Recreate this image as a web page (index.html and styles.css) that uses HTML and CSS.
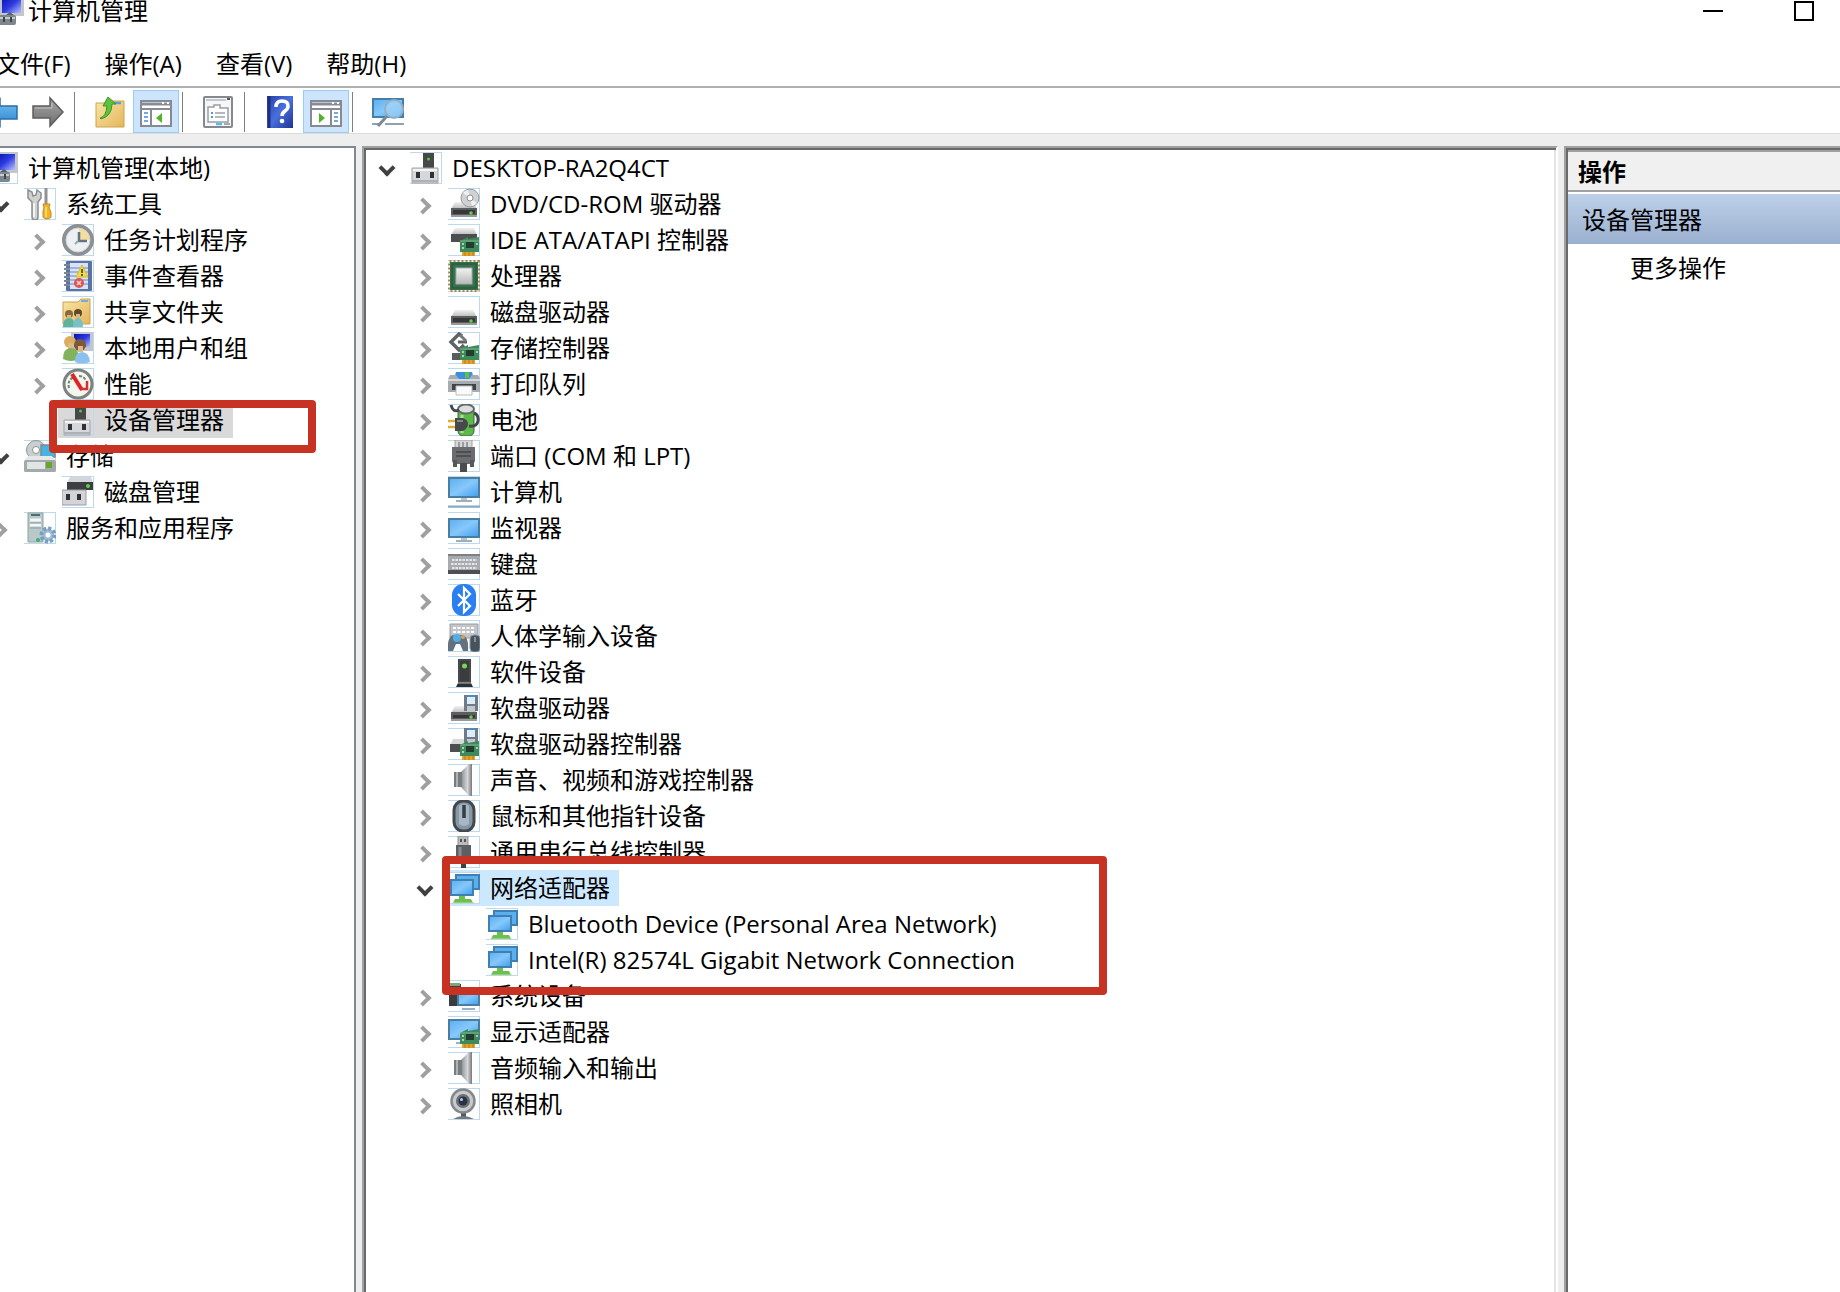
FILE: index.html
```html
<!DOCTYPE html>
<html lang="zh-CN">
<head>
  <meta charset="UTF-8" />
  <meta name="viewport" content="width=device-width, initial-scale=1.0"/>
  <title>计算机管理</title>
  <link rel="stylesheet" href="styles.css">
</head>
<body>
  <!-- icon sprite -->
  <svg class="sprite" aria-hidden="true">
    <defs>
      <linearGradient id="g-screen" x1="0" y1="0" x2="1" y2="1">
        <stop offset="0" stop-color="#5fb0f0"/><stop offset=".5" stop-color="#86c8fb"/><stop offset="1" stop-color="#46a2ee"/>
      </linearGradient>
      <linearGradient id="g-metal" x1="0" y1="0" x2="0" y2="1">
        <stop offset="0" stop-color="#f2f2f2"/><stop offset="1" stop-color="#b9b9b9"/>
      </linearGradient>
      <linearGradient id="g-cone" x1="0" y1="0" x2="1" y2="0">
        <stop offset="0" stop-color="#8b8f92"/><stop offset=".6" stop-color="#d5d7d8"/><stop offset="1" stop-color="#777"/>
      </linearGradient>
      <linearGradient id="g-navy" x1="0" y1="0" x2="1" y2="1">
        <stop offset="0" stop-color="#0a10b0"/><stop offset=".5" stop-color="#2d3be0"/><stop offset="1" stop-color="#b9c4ff"/>
      </linearGradient>
      <linearGradient id="g-folder" x1="0" y1="0" x2="1" y2="1">
        <stop offset="0" stop-color="#fbe6a6"/><stop offset="1" stop-color="#e3b55c"/>
      </linearGradient>
      <linearGradient id="g-blue" x1="0" y1="0" x2="0" y2="1">
        <stop offset="0" stop-color="#7cc4f2"/><stop offset="1" stop-color="#2583cf"/>
      </linearGradient>
      <linearGradient id="g-gray" x1="0" y1="0" x2="0" y2="1">
        <stop offset="0" stop-color="#a5a5a5"/><stop offset="1" stop-color="#707070"/>
      </linearGradient>
      <linearGradient id="g-help" x1="0" y1="0" x2="1" y2="1">
        <stop offset="0" stop-color="#2740a8"/><stop offset=".5" stop-color="#4a6fdc"/><stop offset="1" stop-color="#1e3494"/>
      </linearGradient>
    </defs>

    <symbol id="computer" viewBox="0 0 32 32">
      <path d="M8 0h24v21H8z" fill="#c3c6cc"/><path d="M10 2h19v16H10z" fill="url(#g-navy)"/>
      <path d="M14 20l4-3 5 4z" fill="#56606a"/>
      <rect x="7" y="20" width="17" height="10" rx="2" fill="#7c868c"/>
      <path d="M8 23h15" stroke="#c6ced2" stroke-width="2"/><path d="M12 22v5M19 22v5" stroke="#3c4448" stroke-width="2"/>
    </symbol>
    <symbol id="tools" viewBox="0 0 32 32">
      <path d="M4 2l4 2 1 4 3-1 1-5 4 3v5l-3 4v15q0 3-3 3t-3-3V14L4 10z" fill="#d0d2d2" stroke="#8b8d8e" stroke-width="1.5"/>
      <path d="M10 15v14" stroke="#f4f4f4" stroke-width="2"/>
      <path d="M22 0v16" stroke="#8e9294" stroke-width="3"/><path d="M19 16h7l-1 4 2 4v5q-4 4-8 0v-6l1-3z" fill="#f0b428" stroke="#c98b12"/>
      <path d="M22 19v10" stroke="#ffdf80" stroke-width="1.5"/>
    </symbol>
    <symbol id="clock" viewBox="0 0 32 32">
      <circle cx="16" cy="16" r="14" fill="#eef1f4" stroke="#8d9092" stroke-width="4"/>
      <path d="M17 16V4a12 12 0 0 1 11 12z" fill="#f5dca0"/><circle cx="16" cy="16" r="12" fill="none" stroke="#cfd3d6" stroke-width="1"/>
      <path d="M17 8v9h8" fill="none" stroke="#65747f" stroke-width="2.5"/><path d="M16 17l-3 3" stroke="#9aa6ae" stroke-width="2"/>
    </symbol>
    <symbol id="events" viewBox="0 0 32 32">
      <rect x="4" y="1" width="26" height="30" rx="1" fill="#5a72a4"/><rect x="8" y="3" width="18" height="26" fill="#d9e3f3"/>
      <path d="M8 8h18M8 12h18M8 16h18M8 20h18M8 24h18" stroke="#8fa6d0" stroke-width="1.5"/>
      <path d="M2 5h6M2 9h6M2 13h6M2 17h6M2 21h6M2 25h6" stroke="#7b8797" stroke-width="2"/>
      <path d="M20 5l6 12H14z" fill="#f0dc4a" stroke="#d4bc30"/><path d="M20 9v4M20 14v2" stroke="#6a6020" stroke-width="2"/>
      <circle cx="17" cy="23" r="5" fill="#dd5555"/><path d="M15 21l4 4M19 21l-4 4" stroke="#fbd5d5" stroke-width="1.5"/>
    </symbol>
    <symbol id="shared" viewBox="0 0 32 32">
      <path d="M1 6h15l3-3h9v25H1z" fill="url(#g-folder)" stroke="#cda04c"/><path d="M19 5h7" stroke="#6eaee0" stroke-width="2"/>
      <circle cx="7" cy="18" r="4" fill="#8a6a3c"/><circle cx="16" cy="17" r="4" fill="#5c4a2a"/>
      <path d="M1 31q0-9 6-9t5 9z" fill="#5fb39a"/><path d="M11 31q0-9 5-9t5 9z" fill="#78c0c4"/>
      <path d="M5 19h4v3H5zM14 18h4v4h-4z" fill="#e0b482"/>
    </symbol>
    <symbol id="users" viewBox="0 0 32 32">
      <path d="M9 0h22v19H9z" fill="#c3c6cc"/><path d="M12 2h16v13H12z" fill="url(#g-navy)"/>
      <circle cx="8" cy="10" r="6" fill="#dcae5c"/><circle cx="18" cy="13" r="6" fill="#7a5b36"/>
      <path d="M6 11h6v6H6zM16 14h5v6h-5z" fill="#dcb98b"/>
      <path d="M1 27q0-11 8-11t8 11q-8 4-16 0z" fill="#82b25c"/><path d="M13 30q0-10 7-10t8 10q-8 3-15 0z" fill="#8cc0ee"/>
    </symbol>
    <symbol id="perf" viewBox="0 0 32 32">
      <circle cx="16" cy="16" r="14" fill="#f5f5f0" stroke="#7d827e" stroke-width="3"/>
      <path d="M7 20q-2-9 6-11M17 8q5 0 7 5" fill="none" stroke="#5e8c7c" stroke-width="2" stroke-dasharray="3 1.5"/>
      <path d="M10 6l10 16" stroke="#e02424" stroke-width="4"/><path d="M25 13v8h-6" fill="none" stroke="#d63030" stroke-width="2.5"/>
    </symbol>
    <symbol id="devmgr" viewBox="0 0 32 32">
      <path d="M13 1h11v17H13z" fill="#48484a"/><path d="M16 4h5v4h-5z" fill="#35503a"/><circle cx="18.500" cy="7" r="1.500" fill="#62c04c"/>
      <path d="M2 16h26v15H2z" fill="#d6d7da" stroke="#a4a5a8"/><path d="M3 17h24v2H3z" fill="#f4f4f6"/>
      <path d="M6 20h4v6H6zM20 20h4v6h-4z" fill="#303236"/><path d="M2 29h26" stroke="#aeb0b4" stroke-width="2"/>
    </symbol>
    <symbol id="storage" viewBox="0 0 32 32">
      <circle cx="12" cy="10" r="9.500" fill="#c9cfce" stroke="#8e9694"/><circle cx="12" cy="10" r="3.500" fill="#fff" stroke="#8a9290"/>
      <path d="M17 5h14v12H17z" fill="#44b4e2" stroke="#7d8890" stroke-width="1.500"/>
      <path d="M4 16h24l4 5H0z" fill="#e6e8e8"/><rect x="0" y="20" width="32" height="12" rx="2" fill="#a3a8aa"/>
      <rect x="3" y="22" width="18" height="7" fill="#dfe4e4"/><rect x="22" y="22" width="6" height="6" fill="#67a628"/>
    </symbol>
    <symbol id="diskmgmt" viewBox="0 0 32 32">
      <path d="M8 1h21l2 6H5z" fill="#d4d5d8"/><path d="M5 6h26v8H5z" fill="#3c3e40"/><circle cx="26" cy="10" r="2" fill="#5ed04a"/>
      <path d="M0 14h24v15H0z" fill="#d3d4d7" stroke="#9b9c9f"/><path d="M4 18h4v6H4zM15 18h4v6h-4z" fill="#303236"/>
    </symbol>
    <symbol id="services" viewBox="0 0 32 32">
      <path d="M4 1h15v29H4z" fill="#b9c8c8" stroke="#90a3a4"/><path d="M7 2h9v2H7z" fill="#4e6c76"/>
      <path d="M6 8h11M6 13h11" stroke="#f4f8f8" stroke-width="3"/><path d="M6 11h11M6 16h11" stroke="#8b9ea4"/>
      <circle cx="14" cy="28" r="2" fill="#3fb060"/>
      <circle cx="24" cy="23" r="6.500" fill="#9cbedb" stroke="#7a9fbe" stroke-width="4" stroke-dasharray="3 2"/><circle cx="24" cy="23" r="2.500" fill="#fff"/>
    </symbol>
    <symbol id="drive" viewBox="0 0 32 32">
      <path d="M7 14h18l4 7H3z" fill="url(#g-metal)"/><path d="M3 20h26v9H3z" fill="#5b5d5e"/><path d="M5 22h22v4H5z" fill="#353738"/>
      <circle cx="23" cy="25" r="1.800" fill="#5ed04a"/><path d="M3 28h26" stroke="#999" stroke-width="2"/>
    </symbol>
    <symbol id="card" viewBox="0 0 32 32">
      <path d="M12 17l8-4v2l11-2v15H12z" fill="#3f8a5a"/><path d="M12 17h19" stroke="#7fb890"/>
      <path d="M18 18h8v6h-8z" fill="#223c30"/><path d="M14 20h2M28 20h2M14 24h2" stroke="#a6d4ae" stroke-width="2"/><path d="M14 28h13v4H14z" fill="#e0a42c"/>
      <path d="M17 28v4M21 28v4M25 28v4" stroke="#b87c14"/>
    </symbol>
    <symbol id="dvd" viewBox="0 0 32 32">
      <use href="#drive"/><circle cx="22" cy="10" r="9" fill="#cfd1d2" stroke="#989a9b"/><path d="M22 10l-7-5a9 9 0 0 1 5-3zM22 10l7 5a9 9 0 0 1-5 3z" fill="#f0f0f0"/>
      <circle cx="22" cy="10" r="3" fill="#fff" stroke="#8c8e90"/>
    </symbol>
    <symbol id="ide" viewBox="0 0 32 32">
      <path d="M7 4h19l3 7H3z" fill="url(#g-metal)"/><path d="M3 10h26v8H3z" fill="#4c4e4f"/><use href="#card"/>
    </symbol>
    <symbol id="cpu" viewBox="0 0 32 32">
      <rect x="1.500" y="1.500" width="29" height="29" fill="none" stroke="#a98f50" stroke-width="3" stroke-dasharray="2 2"/>
      <rect x="2" y="2" width="28" height="28" fill="#38704f"/><rect x="4" y="4" width="24" height="24" fill="none" stroke="#235238"/>
      <rect x="8" y="8" width="16" height="16" fill="url(#g-metal)" stroke="#9fb5a6"/>
    </symbol>
    <symbol id="storctl" viewBox="0 0 32 32">
      <path d="M4 21h12v7H4z" fill="#5a5c5d"/>
      <path d="M14 4l-3-2-8 8 8 8 5-5" fill="none" stroke="#606264" stroke-width="3.500"/><path d="M10 10h9" stroke="#606264" stroke-width="3"/><path d="M12 3l6 6" stroke="#77797b" stroke-width="3"/>
      <use href="#card"/>
    </symbol>
    <symbol id="printer" viewBox="0 0 32 32">
      <path d="M8 4h16l2 7H6z" fill="#3b8fdc"/><path d="M17 4h4v6h-4z" fill="#5ec04a"/>
      <path d="M2 7h6l3 4h10l3-4h6l2 4v13H0V11z" fill="#a6acb0"/><path d="M0 12h32" stroke="#d5d9db" stroke-width="2"/>
      <path d="M4 16h24v6H4z" fill="#3f4448"/><path d="M8 18h16v9H8z" fill="#fafafa" stroke="#bbb"/>
    </symbol>
    <symbol id="battery" viewBox="0 0 32 32">
      <rect x="10" y="3" width="16" height="29" rx="5" fill="#5cb848" stroke="#456045"/><ellipse cx="18" cy="5" rx="8" ry="4.500" fill="#dcdede" stroke="#63686a" stroke-width="2"/>
      <path d="M14 11v6M14 25v4" stroke="#a5e694" stroke-width="3"/>
      <path d="M3 1q2 8 8 5M26 9q5 2 4 8t-9 5" fill="none" stroke="#44474a" stroke-width="3"/>
      <path d="M0 17h8M0 23h8" stroke="#e0ae30" stroke-width="2.500"/><path d="M7 14h8q5 2 5 6t-5 7H7z" fill="#46494c"/><path d="M9 17h6" stroke="#85898c" stroke-width="2"/>
    </symbol>
    <symbol id="port" viewBox="0 0 32 32">
      <path d="M7 0h17v8H7z" fill="#d5d7d9" stroke="#9c9ea0"/><path d="M11 2v5M15 2v5M19 2v5" stroke="#85888a" stroke-width="1.500"/>
      <path d="M4 7h23v14q-1 3-4 3H8q-3 0-4-3z" fill="#6a6c6e"/><path d="M8 12h15M8 16h15" stroke="#4d4f51" stroke-width="2"/>
      <path d="M5 20h4v7H5zM22 20h4v7h-4z" fill="#56585a"/><path d="M12 23h7v9h-7z" fill="#4a4c4e"/>
    </symbol>
    <symbol id="monitor" viewBox="0 0 32 32">
      <path d="M0 6h32v20H0z" fill="#4a7ea0"/><path d="M2 8h28v16H2z" fill="url(#g-screen)"/>
      <path d="M13 26h6v2h-6z" fill="#b8c6cf"/><path d="M8 29h16" stroke="#9cb0bd" stroke-width="2"/>
    </symbol>
    <symbol id="pc" viewBox="0 0 32 32">
      <path d="M0 1h32v21H0z" fill="#4a7ea0"/><path d="M2 3h28v17H2z" fill="url(#g-screen)"/>
      <path d="M13 22h6v2h-6z" fill="#b8c6cf"/><path d="M8 25h16" stroke="#9cb0bd" stroke-width="2"/><path d="M0 30.500h32" stroke="#88a9bd" stroke-width="2"/>
    </symbol>
    <symbol id="keyboard" viewBox="0 0 32 32">
      <path d="M0 6h32v17H0z" fill="#a7abaf"/><path d="M0 7h32" stroke="#7d8184" stroke-width="2"/><path d="M0 22h32v4H0z" fill="#4c5053"/>
      <path d="M4 12h25M3 16h26M4 20h25" stroke="#e4e6e7" stroke-width="2" stroke-dasharray="2.500 1"/>
    </symbol>
    <symbol id="bluetooth" viewBox="0 0 32 32">
      <rect x="4" y="0" width="24" height="32" rx="11" fill="#2a80f0"/>
      <path d="M10 10l12 12-6 6V4l6 6-12 12" fill="none" stroke="#fff" stroke-width="2.200"/>
    </symbol>
    <symbol id="hid" viewBox="0 0 32 32">
      <path d="M2 4h28v14H2z" fill="#c3c6c9" stroke="#989c9f"/><path d="M5 8h22M5 12h22" stroke="#fff" stroke-width="2" stroke-dasharray="3 1.500"/>
      <path d="M0 31q-1-14 5-16h10q6 2 5 16h-5l-3-7H8l-3 7z" fill="#62727e"/><circle cx="9" cy="18" r="4" fill="#52aeea"/><circle cx="15" cy="17" r="2" fill="#e8a040"/>
      <rect x="22" y="15" width="10" height="17" rx="4" fill="#46525c" stroke="#8797a2"/><path d="M27 17v5" stroke="#c6d2da"/>
    </symbol>
    <symbol id="software" viewBox="0 0 32 32">
      <path d="M10 3h13v24H10z" fill="#47494a"/><path d="M12 5h9v20h-9z" fill="#3a3c3d"/><circle cx="16.500" cy="10" r="2.500" fill="#72d858"/>
      <path d="M10 27h13l2 4H8z" fill="#2c2e2f"/><path d="M10 27h13" stroke="#b8b8b8"/>
    </symbol>
    <symbol id="diskette" viewBox="0 0 32 32">
      <path d="M16 3h14v16H16z" fill="#6f7b88"/><path d="M19 4h8v8h-8z" fill="#dcecf8"/><path d="M19 14h8v5h-8z" fill="#c3c8cc"/><path d="M19 4h8" stroke="#4f8ac0" stroke-width="2"/>
    </symbol>
    <symbol id="floppy" viewBox="0 0 32 32">
      <use href="#drive"/><use href="#diskette"/><path d="M3 20h26v3H3z" fill="#5b5d5e"/>
    </symbol>
    <symbol id="floppyctl" viewBox="0 0 32 32">
      <path d="M5 11h16v6H2z" fill="#d8d9da"/><path d="M2 16h16v8H2z" fill="#4c4e4f"/><use href="#diskette" y="-3"/><use href="#card"/>
    </symbol>
    <symbol id="speaker" viewBox="0 0 32 32">
      <path d="M13 8L21 0h3v32h-3l-8-9z" fill="url(#g-cone)"/><path d="M6 8h8v15H6z" fill="#777d81"/><path d="M9 8v15" stroke="#aeb3b6" stroke-width="2"/>
    </symbol>
    <symbol id="mouse" viewBox="0 0 32 32">
      <rect x="6" y="1" width="20" height="30" rx="9" fill="#8696a4" stroke="#42484e" stroke-width="3"/>
      <path d="M11 6q5-4 10 0v18q-5 4-10 0z" fill="#a7b6c3"/><path d="M16 5v13" stroke="#343c44" stroke-width="3.500"/>
    </symbol>
    <symbol id="usb" viewBox="0 0 32 32">
      <path d="M10 0h10v10H10z" fill="#b9bbbd" stroke="#909294"/><path d="M12 3h2v3h-2zM16 3h2v3h-2z" fill="#555"/>
      <path d="M8 9h15v13l-3 5h-9l-3-5z" fill="#5d6062"/><path d="M12 11v12" stroke="#8b8e90" stroke-width="3"/><path d="M13 27h5v5h-5z" fill="#3e4042"/>
    </symbol>
    <symbol id="network" viewBox="0 0 32 32">
      <path d="M7 2h25v16H7z" fill="#3f7fb2"/><path d="M9 4h21v12H9z" fill="#5ab0ee"/>
      <path d="M2 7h24v17H2z" fill="#3f7fb2"/><path d="M4 9h20v13H4z" fill="url(#g-screen)"/>
      <path d="M11 24h6v3h6l2 4H5l2-4h4z" fill="#6cc04c"/><path d="M6 31h20" stroke="#b9dcae"/>
    </symbol>
    <symbol id="system" viewBox="0 0 32 32">
      <path d="M1 4h12v22H1z" fill="#3a3d40"/><path d="M2 3h10v3H2z" fill="#7ca878"/>
      <path d="M9 9h23v17H9z" fill="#4a7ea0"/><path d="M11 11h19v13H11z" fill="url(#g-screen)"/><path d="M14 29h13" stroke="#9cb0bd" stroke-width="2"/>
    </symbol>
    <symbol id="display" viewBox="0 0 32 32">
      <path d="M0 3h32v21H0z" fill="#4a7ea0"/><path d="M2 5h28v17H2z" fill="url(#g-screen)"/><path d="M8 27h8" stroke="#9cb0bd" stroke-width="2"/><use href="#card"/>
    </symbol>
    <symbol id="camera" viewBox="0 0 32 32">
      <path d="M13 24h5v5h-5z" fill="#55585a"/><path d="M5 31q10-6 21 0z" fill="#777a7c"/>
      <circle cx="15" cy="13" r="11.500" fill="#c8cacc" stroke="#85888a" stroke-width="2.500"/><circle cx="15" cy="13" r="7" fill="#6a7076"/>
      <circle cx="15" cy="13" r="4.500" fill="#283444"/><circle cx="13.500" cy="11.500" r="1.500" fill="#b6cbe4"/>
    </symbol>

    <!-- toolbar -->
    <symbol id="back" viewBox="0 0 32 32">
      <path d="M1 16L14 3v7h17v13H14v7z" fill="url(#g-blue)" stroke="#2c6da6" stroke-width="1.500"/>
    </symbol>
    <symbol id="forward" viewBox="0 0 32 32">
      <path d="M31 16L18 2v8H1v12h17v8z" fill="url(#g-gray)" stroke="#5e5e5e" stroke-width="1.500"/><path d="M3 12h17V7" fill="none" stroke="#c2c2c2"/>
    </symbol>
    <symbol id="up" viewBox="0 0 32 32">
      <path d="M2 7h10l2-2h16v26H2z" fill="url(#g-folder)" stroke="#cfa24c"/><path d="M20 7h7" stroke="#5c9ed8" stroke-width="2.500"/>
      <path d="M6 22q6-1 7-12H9l5-9 8 7h-4q0 12-11 15z" fill="#5fc23c" stroke="#3d9426"/>
    </symbol>
    <symbol id="tree-pane" viewBox="0 0 32 32">
      <path d="M1 5h30v25H1z" fill="#fff" stroke="#868a94" stroke-width="2"/><path d="M1 8h30" stroke="#868a94" stroke-width="3"/><path d="M22 7h2M27 7h2" stroke="#fff" stroke-width="2"/>
      <path d="M1 13h30M11 13v17" stroke="#868a94" stroke-width="2"/><path d="M4 17h4M4 21h4M4 25h4" stroke="#4c8ac8" stroke-width="1.500"/>
      <path d="M22 17v10l-6-5z" fill="#55b02c"/>
    </symbol>
    <symbol id="action-pane" viewBox="0 0 32 32">
      <path d="M1 5h30v25H1z" fill="#fff" stroke="#868a94" stroke-width="2"/><path d="M1 8h30" stroke="#868a94" stroke-width="3"/><path d="M22 7h2M27 7h2" stroke="#fff" stroke-width="2"/>
      <path d="M1 13h30M21 13v17" stroke="#868a94" stroke-width="2"/><path d="M24 17h4M24 21h4M24 25h4" stroke="#4c8ac8" stroke-width="1.500"/>
      <path d="M9 17v10l6-5z" fill="#55b02c"/>
    </symbol>
    <symbol id="props" viewBox="0 0 32 32">
      <rect x="2" y="1" width="28" height="30" rx="1" fill="#f6f7f8" stroke="#85898e" stroke-width="2"/><path d="M4 4h20" stroke="#c4c8cc" stroke-width="2"/><path d="M25 3h3" stroke="#555" stroke-width="2"/>
      <path d="M6 11h6v-2h6v3h8v14H6z" fill="#fff" stroke="#9a9ea4" stroke-width="1.500"/><path d="M9 17h2M9 21h2" stroke="#4c9cd8" stroke-width="2"/><path d="M13 17h10M13 21h10" stroke="#a0a4a8" stroke-width="1.500"/>
      <path d="M14 28h6" stroke="#56bce8" stroke-width="2.500"/><path d="M22 28h6" stroke="#a6aaae" stroke-width="2"/>
    </symbol>
    <symbol id="help" viewBox="0 0 32 32">
      <path d="M3 0h26v32H3z" fill="url(#g-help)"/><path d="M5 0v32" stroke="#1c2f80" stroke-width="3"/>
      <path d="M12 11q0-6 6-6t6 5q0 3-3 5t-3 5" fill="none" stroke="#fff" stroke-width="3.500"/><circle cx="18" cy="25" r="2.300" fill="#fff"/>
    </symbol>
    <symbol id="scan" viewBox="0 0 32 32">
      <path d="M0 2h32v20H0z" fill="#437fa8"/><path d="M2 4h28v16H2z" fill="url(#g-screen)"/><path d="M0 28h9M13 28h19" stroke="#8fa2b0" stroke-width="2"/>
      <path d="M16 19L6 30" stroke="#7b8a96" stroke-width="3"/><circle cx="22" cy="13" r="9" fill="#a2d2f4" fill-opacity=".75" stroke="#8fb0c6" stroke-width="2"/>
    </symbol>
  </svg>

  <div class="window">
    <header class="titlebar">
      <svg class="app-icon"><use href="#computer"/></svg>
      <h1>计算机管理</h1>
      <div class="window-buttons">
        <button class="minimize" aria-label="最小化"></button>
        <button class="maximize" aria-label="最大化"></button>
      </div>
    </header>

    <nav class="menubar">
      <button>文件(F)</button>
      <button>操作(A)</button>
      <button>查看(V)</button>
      <button>帮助(H)</button>
    </nav>

    <div class="toolbar">
      <button aria-label="后退"><svg><use href="#back"/></svg></button>
      <button aria-label="前进"><svg><use href="#forward"/></svg></button>
      <span class="separator"></span>
      <button aria-label="上移一级"><svg><use href="#up"/></svg></button>
      <button class="pressed" aria-label="控制台树"><svg><use href="#tree-pane"/></svg></button>
      <span class="separator"></span>
      <button aria-label="属性"><svg><use href="#props"/></svg></button>
      <span class="separator"></span>
      <button aria-label="帮助"><svg><use href="#help"/></svg></button>
      <button class="pressed" aria-label="操作窗格"><svg><use href="#action-pane"/></svg></button>
      <span class="separator"></span>
      <button aria-label="扫描硬件改动"><svg><use href="#scan"/></svg></button>
    </div>

    <main class="panes">
      <section class="pane console-pane">
        <ul class="tree">
          <li>
            <div class="row"><button class="toggle open" aria-label="折叠"></button><span class="item"><svg><use href="#computer"/></svg>计算机管理(本地)</span></div>
            <ul>
              <li>
                <div class="row"><button class="toggle open" aria-label="折叠"></button><span class="item"><svg><use href="#tools"/></svg>系统工具</span></div>
                <ul>
                  <li class="row"><button class="toggle" aria-label="展开"></button><span class="item"><svg><use href="#clock"/></svg>任务计划程序</span></li>
                  <li class="row"><button class="toggle" aria-label="展开"></button><span class="item"><svg><use href="#events"/></svg>事件查看器</span></li>
                  <li class="row"><button class="toggle" aria-label="展开"></button><span class="item"><svg><use href="#shared"/></svg>共享文件夹</span></li>
                  <li class="row"><button class="toggle" aria-label="展开"></button><span class="item"><svg><use href="#users"/></svg>本地用户和组</span></li>
                  <li class="row"><button class="toggle" aria-label="展开"></button><span class="item"><svg><use href="#perf"/></svg>性能</span></li>
                  <li class="row marked"><span class="leaf"></span><span class="item inactive"><svg><use href="#devmgr"/></svg>设备管理器</span><span class="mark mark-console"></span></li>
                </ul>
              </li>
              <li>
                <div class="row"><button class="toggle open" aria-label="折叠"></button><span class="item"><svg><use href="#storage"/></svg>存储</span></div>
                <ul>
                  <li class="row"><span class="leaf"></span><span class="item"><svg><use href="#diskmgmt"/></svg>磁盘管理</span></li>
                </ul>
              </li>
              <li class="row"><button class="toggle" aria-label="展开"></button><span class="item"><svg><use href="#services"/></svg>服务和应用程序</span></li>
            </ul>
          </li>
        </ul>
      </section>

      <section class="pane device-pane">
        <ul class="tree">
          <li>
            <div class="row"><button class="toggle open" aria-label="折叠"></button><span class="item"><svg><use href="#devmgr"/></svg>DESKTOP-RA2Q4CT</span></div>
            <ul>
              <li class="row"><button class="toggle" aria-label="展开"></button><span class="item"><svg><use href="#dvd"/></svg>DVD/CD-ROM 驱动器</span></li>
              <li class="row"><button class="toggle" aria-label="展开"></button><span class="item"><svg><use href="#ide"/></svg>IDE ATA/ATAPI 控制器</span></li>
              <li class="row"><button class="toggle" aria-label="展开"></button><span class="item"><svg><use href="#cpu"/></svg>处理器</span></li>
              <li class="row"><button class="toggle" aria-label="展开"></button><span class="item"><svg><use href="#drive"/></svg>磁盘驱动器</span></li>
              <li class="row"><button class="toggle" aria-label="展开"></button><span class="item"><svg><use href="#storctl"/></svg>存储控制器</span></li>
              <li class="row"><button class="toggle" aria-label="展开"></button><span class="item"><svg><use href="#printer"/></svg>打印队列</span></li>
              <li class="row"><button class="toggle" aria-label="展开"></button><span class="item"><svg><use href="#battery"/></svg>电池</span></li>
              <li class="row"><button class="toggle" aria-label="展开"></button><span class="item"><svg><use href="#port"/></svg>端口 (COM 和 LPT)</span></li>
              <li class="row"><button class="toggle" aria-label="展开"></button><span class="item"><svg><use href="#pc"/></svg>计算机</span></li>
              <li class="row"><button class="toggle" aria-label="展开"></button><span class="item"><svg><use href="#monitor"/></svg>监视器</span></li>
              <li class="row"><button class="toggle" aria-label="展开"></button><span class="item"><svg><use href="#keyboard"/></svg>键盘</span></li>
              <li class="row"><button class="toggle" aria-label="展开"></button><span class="item"><svg><use href="#bluetooth"/></svg>蓝牙</span></li>
              <li class="row"><button class="toggle" aria-label="展开"></button><span class="item"><svg><use href="#hid"/></svg>人体学输入设备</span></li>
              <li class="row"><button class="toggle" aria-label="展开"></button><span class="item"><svg><use href="#software"/></svg>软件设备</span></li>
              <li class="row"><button class="toggle" aria-label="展开"></button><span class="item"><svg><use href="#floppy"/></svg>软盘驱动器</span></li>
              <li class="row"><button class="toggle" aria-label="展开"></button><span class="item"><svg><use href="#floppyctl"/></svg>软盘驱动器控制器</span></li>
              <li class="row"><button class="toggle" aria-label="展开"></button><span class="item"><svg><use href="#speaker"/></svg>声音、视频和游戏控制器</span></li>
              <li class="row"><button class="toggle" aria-label="展开"></button><span class="item"><svg><use href="#mouse"/></svg>鼠标和其他指针设备</span></li>
              <li class="row"><button class="toggle" aria-label="展开"></button><span class="item"><svg><use href="#usb"/></svg>通用串行总线控制器</span></li>
              <li class="marked">
                <div class="row"><button class="toggle open" aria-label="折叠"></button><span class="item selected"><svg><use href="#network"/></svg>网络适配器</span></div>
                <ul>
                  <li class="row"><span class="leaf"></span><span class="item"><svg><use href="#network"/></svg>Bluetooth Device (Personal Area Network)</span></li>
                  <li class="row"><span class="leaf"></span><span class="item"><svg><use href="#network"/></svg>Intel(R) 82574L Gigabit Network Connection</span></li>
                </ul>
                <span class="mark mark-network"></span>
              </li>
              <li class="row"><button class="toggle" aria-label="展开"></button><span class="item"><svg><use href="#system"/></svg>系统设备</span></li>
              <li class="row"><button class="toggle" aria-label="展开"></button><span class="item"><svg><use href="#display"/></svg>显示适配器</span></li>
              <li class="row"><button class="toggle" aria-label="展开"></button><span class="item"><svg><use href="#speaker"/></svg>音频输入和输出</span></li>
              <li class="row"><button class="toggle" aria-label="展开"></button><span class="item"><svg><use href="#camera"/></svg>照相机</span></li>
            </ul>
          </li>
        </ul>
      </section>

      <aside class="pane action-pane">
        <h2>操作</h2>
        <h3>设备管理器</h3>
        <button class="more">更多操作</button>
      </aside>
    </main>
  </div>
</body>
</html>
```
FILE: styles.css
```css
*,
*::before {
  box-sizing: border-box;
}

body {
  margin: 0;
  font-family: "Open Sans", "Noto Sans CJK SC", sans-serif;
  font-size: 24px;
  line-height: 36px;
  color: #000;
  background-color: #fff;
  overflow: hidden;
}

button {
  padding: 0;
  border: none;
  background: none;
  font: inherit;
  color: inherit;
}

h1, h2, h3 {
  margin: 0;
  font-size: 24px;
  font-weight: normal;
}

ul {
  list-style: none;
  margin: 0;
  padding: 0;
}

.sprite {
  position: absolute;
  width: 0;
  height: 0;
}

.window {
  display: flex;
  flex-direction: column;
  height: 100vh;
}

/* title bar and menu */
.titlebar {
  display: flex;
  align-items: center;
  height: 22px;
  margin-left: -8px;
}

.titlebar h1 {
  line-height: 24px;
}

.app-icon {
  width: 32px;
  height: 32px;
  margin-right: 4px;
}

.window-buttons {
  display: flex;
  gap: 71px;
  margin-left: auto;
  padding-right: 26px;
}

.minimize {
  width: 20px;
  height: 20px;
  background: linear-gradient(#000, #000) center / 20px 2px no-repeat;
}

.maximize {
  width: 20px;
  height: 20px;
  border: 2px solid #000;
}

.menubar {
  display: flex;
  gap: 34px;
  height: 66px;
  margin-left: -4px;
  padding: 24px 0 4px;
  border-bottom: 2px solid #b0b0b0;
}

/* toolbar */
.toolbar {
  display: flex;
  align-items: center;
  height: 46px;
  padding-top: 2px;
  border-bottom: 1px solid #dcdcdc;
}

.toolbar button:first-child {
  margin-left: -21px;
}

.toolbar button {
  display: flex;
  align-items: center;
  justify-content: center;
  width: 46px;
  height: 43px;
  border: 1px solid transparent;
}

.toolbar .pressed {
  background-color: #cce4fc;
  border-color: #9ccaf0;
}

.toolbar svg {
  width: 32px;
  height: 32px;
}

.separator {
  width: 1px;
  height: 40px;
  margin: 0 12px 0 3px;
  background-color: #808080;
}

/* panes */
.panes {
  display: flex;
  flex: 1;
  min-height: 0;
  gap: 6px;
  padding-top: 12px;
  background-color: #eee;
}

.pane {
  background-color: #fff;
}

.console-pane {
  width: 356px;
  padding-top: 2px;
  border-top: 2px solid #828790;
  border-right: 2px solid #828790;
}

.console-pane > .tree {
  margin-left: -52px;
}

.device-pane {
  flex: 1;
  padding-left: 2px;
  border-top: 2px solid #a0a0a0;
  border-left: 2px solid #a0a0a0;
  border-right: 2px solid #fff;
  box-shadow: inset 2px 2px #696969, inset -2px 0 #e3e3e3;
}

.device-pane > .tree {
  padding: 2px 0 0 6px;
}

/* tree */
.tree ul {
  padding-left: 38px;
}

.row {
  display: flex;
  height: 36px;
}

.toggle,
.leaf {
  display: flex;
  align-items: center;
  width: 34px;
  flex-shrink: 0;
}

.toggle::before {
  content: "";
  width: 12px;
  height: 12px;
  margin: 4px 0 0 7px;
  border-top: 4px solid #a0a0a0;
  border-right: 4px solid #a0a0a0;
  transform: rotate(45deg);
}

.toggle.open::before {
  margin: 0 0 0 9px;
  border-color: #404040;
  transform: rotate(135deg);
}

.item {
  display: flex;
  align-items: center;
  gap: 10px;
  padding: 0 9px 0 4px;
  white-space: nowrap;
}

.item svg {
  width: 32px;
  height: 32px;
  background-color: #fff;
  box-shadow: inset -1px 1px #bcd9ee, inset 0 -1px #bcd9ee;
}

.selected {
  background-color: #cce8ff;
}

.inactive {
  background-color: #d9d9d9;
}

.inactive svg {
  background-color: #d9d9d9;
}

/* red highlight frames over the tree */
.marked {
  position: relative;
}

.mark {
  position: absolute;
  border: 8px solid #c83222;
  border-radius: 4px;
  pointer-events: none;
}

.mark-console {
  top: -2px;
  left: 25px;
  width: 267px;
  height: 53px;
}

.mark-network {
  top: -14px;
  left: 32px;
  width: 665px;
  height: 139px;
}

/* actions */
.action-pane {
  width: 276px;
  border-top: 2px solid #a0a0a0;
  border-left: 2px solid #a0a0a0;
  box-shadow: inset 2px 2px #696969;
  padding: 2px 0 0 2px;
}

.action-pane h2 {
  height: 42px;
  padding: 2px 10px;
  font-weight: bold;
  background-color: #f0f0f0;
  border-top: 2px solid #a0a0a0;
  border-bottom: 2px solid #a0a0a0;
}

.action-pane h3 {
  height: 50px;
  margin-top: 2px;
  padding: 8px 14px;
  background: linear-gradient(#bed0e9, #9ab0cf);
}

.more {
  display: block;
  margin: 6px 0 0 62px;
}
```
